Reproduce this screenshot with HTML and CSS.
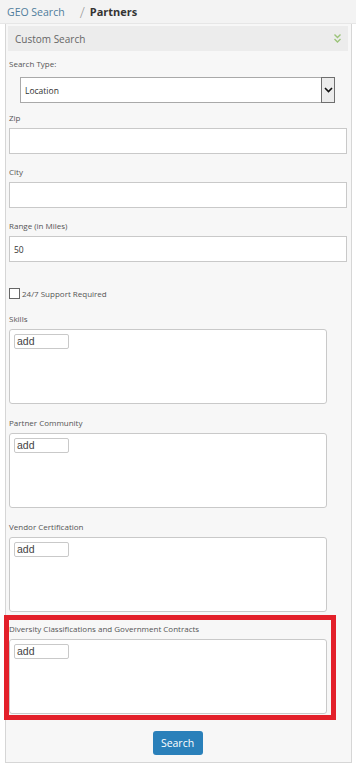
FILE: index.html
```html
<!DOCTYPE html>
<html>
	<head>
		<meta charset="utf-8" />
		<title>Partners</title>
		<link rel="stylesheet" href="styles.css">
	</head>
	<body>
		<div id="crumbs">
			<a href="#" class="crumb-link">GEO Search</a>
			<span class="crumb-sep">/</span>
			<span class="crumb-current">Partners</span>
		</div>

		<div id="panel">
			<div class="panel-head">
				<span>Custom Search</span>
				<svg class="chev" width="9" height="12" viewBox="0 0 9 12">
					<polyline points="1.5,1.5 4.5,4.5 7.5,1.5" fill="none" stroke="#9cc47a" stroke-width="1.4"/>
					<polyline points="1.5,6 4.5,9 7.5,6" fill="none" stroke="#9cc47a" stroke-width="1.4"/>
				</svg>
			</div>

			<form class="search-form">
				<label class="lbl">Search Type:</label>
				<div class="select">
					<span class="select-text">Location</span>
					<span class="select-arrow">
						<svg width="9" height="6" viewBox="0 0 9 6">
							<polyline points="1,1 4.5,4.5 8,1" fill="none" stroke="#111" stroke-width="1.6"/>
						</svg>
					</span>
				</div>

				<div class="field first">
					<label class="lbl">Zip</label>
					<input class="txt" type="text">
				</div>
				<div class="field">
					<label class="lbl">City</label>
					<input class="txt" type="text">
				</div>
				<div class="field">
					<label class="lbl">Range (in Miles)</label>
					<input class="txt" type="text" value="50">
				</div>

				<div class="check-row">
					<span class="check"></span>
					<span class="check-text">24/7 Support Required</span>
				</div>

				<div class="tag-field">
					<label class="lbl">Skills</label>
					<div class="tag-box"><span class="tag-add">add</span></div>
				</div>
				<div class="tag-field">
					<label class="lbl">Partner Community</label>
					<div class="tag-box"><span class="tag-add">add</span></div>
				</div>
				<div class="tag-field">
					<label class="lbl">Vendor Certification</label>
					<div class="tag-box"><span class="tag-add">add</span></div>
				</div>

				<!-- highlighted -->
				<div class="mark">
					<label class="lbl">Diversity Classifications and Government Contracts</label>
					<div class="tag-box"><span class="tag-add">add</span></div>
				</div>

				<div class="actions">
					<button type="button" class="btn">Search</button>
				</div>
			</form>
		</div>
	</body>
</html>
```

FILE: styles.css
```css
*{
	padding: 0;
	margin: 0;
	box-sizing: border-box;
}
body{
	width: 356px;
	background: #fff;
	font-family: "Liberation Sans", Arial, sans-serif;
	color: #333;
}

/*breadcrumb*/
#crumbs{
	height: 24px;
	display: flex;
	align-items: center;
	padding-left: 7px;
	background: #f3f3f3;
	border-bottom: 1px solid #e6e6e6;
	font-family: "Open Sans", sans-serif;
}
.crumb-link{
	font-size: 10.5px;
	color: #4f7d9c;
	text-decoration: none;
}
.crumb-sep{
	font-size: 15px;
	font-weight: 300;
	color: #999;
	margin: 0 5px 0 15px;
}
.crumb-current{
	font-size: 11px;
	font-weight: bold;
	color: #333;
}

/*panel*/
#panel{
	margin: 0 5px 0 5px;
	width: 347px;
	background: #f7f7f7;
	border: 1px solid #d6d6d6;
	border-top: none;
	padding: 2px 3px 7px 2px;
}
.panel-head{
	height: 25px;
	display: flex;
	align-items: center;
	justify-content: space-between;
	padding: 0 6px 0 7px;
	background: #ececec;
	font-family: "Open Sans", sans-serif;
	font-size: 10px;
	color: #666;
}
.chev{
	display: block;
}

.search-form{
	padding: 7px 0 0 1px;
}
.lbl{
	display: block;
	height: 12px;
	line-height: 12px;
	font-family: "Open Sans", sans-serif;
	font-size: 8px;
	color: #555;
	white-space: nowrap;
}

.select{
	display: flex;
	align-items: stretch;
	width: 315px;
	height: 26px;
	margin: 7px 0 0 11px;
	background: #fff;
	border: 1px solid #a9a9a9;
}
.select-text{
	flex: 1;
	display: flex;
	align-items: center;
	padding-left: 4px;
	font-family: "Open Sans", sans-serif;
	font-size: 8.5px;
	color: #333;
}
.select-arrow{
	width: 14px;
	display: flex;
	align-items: center;
	justify-content: center;
	background: #ececec;
	border: 1px solid #6f6f6f;
	margin: -1px -1px -1px 0;
}

.field{
	margin-top: 12px;
}
.field.first{
	margin-top: 9px;
}
.txt{
	display: block;
	width: 338px;
	height: 26px;
	margin-top: 4px;
	padding: 0 4px;
	border: 1px solid #c9c9c9;
	background: #fff;
	font-family: "Open Sans", sans-serif;
	font-size: 8.5px;
	color: #333;
	outline: none;
}

.check-row{
	display: flex;
	align-items: center;
	height: 12px;
	margin-top: 25px;
}
.check{
	width: 11px;
	height: 11px;
	border: 1px solid #666;
	background: #fff;
}
.check-text{
	margin-left: 2px;
	font-family: "Open Sans", sans-serif;
	font-size: 8px;
	color: #555;
}

.tag-field{
	margin-top: 14px;
}
.tag-field + .tag-field{
	margin-top: 13px;
}
.tag-box{
	width: 318px;
	height: 75px;
	margin-top: 4px;
	padding: 4px 0 0 4px;
	background: #fff;
	border: 1px solid #c9c9c9;
	border-radius: 3px;
}
.tag-add{
	display: block;
	width: 55px;
	height: 15px;
	line-height: 13px;
	padding-left: 2px;
	border: 1px solid #c9c9c9;
	border-radius: 2px;
	font-size: 10.5px;
	color: #444;
}

/*red highlight around the last field*/
.mark{
	width: 332px;
	margin: 3px 0 0 -5px;
	padding: 3px 4px 1px 0;
	border: 5px solid #e3202a;
}
.mark .lbl{
	margin-bottom: 2px;
}

.actions{
	display: flex;
	justify-content: center;
	margin-top: 11px;
	padding-right: 2px;
}
.btn{
	width: 50px;
	height: 24px;
	border: none;
	border-radius: 3px;
	background: #2a80ba;
	color: #fff;
	font-family: "Open Sans", sans-serif;
	font-size: 10.5px;
	cursor: pointer;
}
```
